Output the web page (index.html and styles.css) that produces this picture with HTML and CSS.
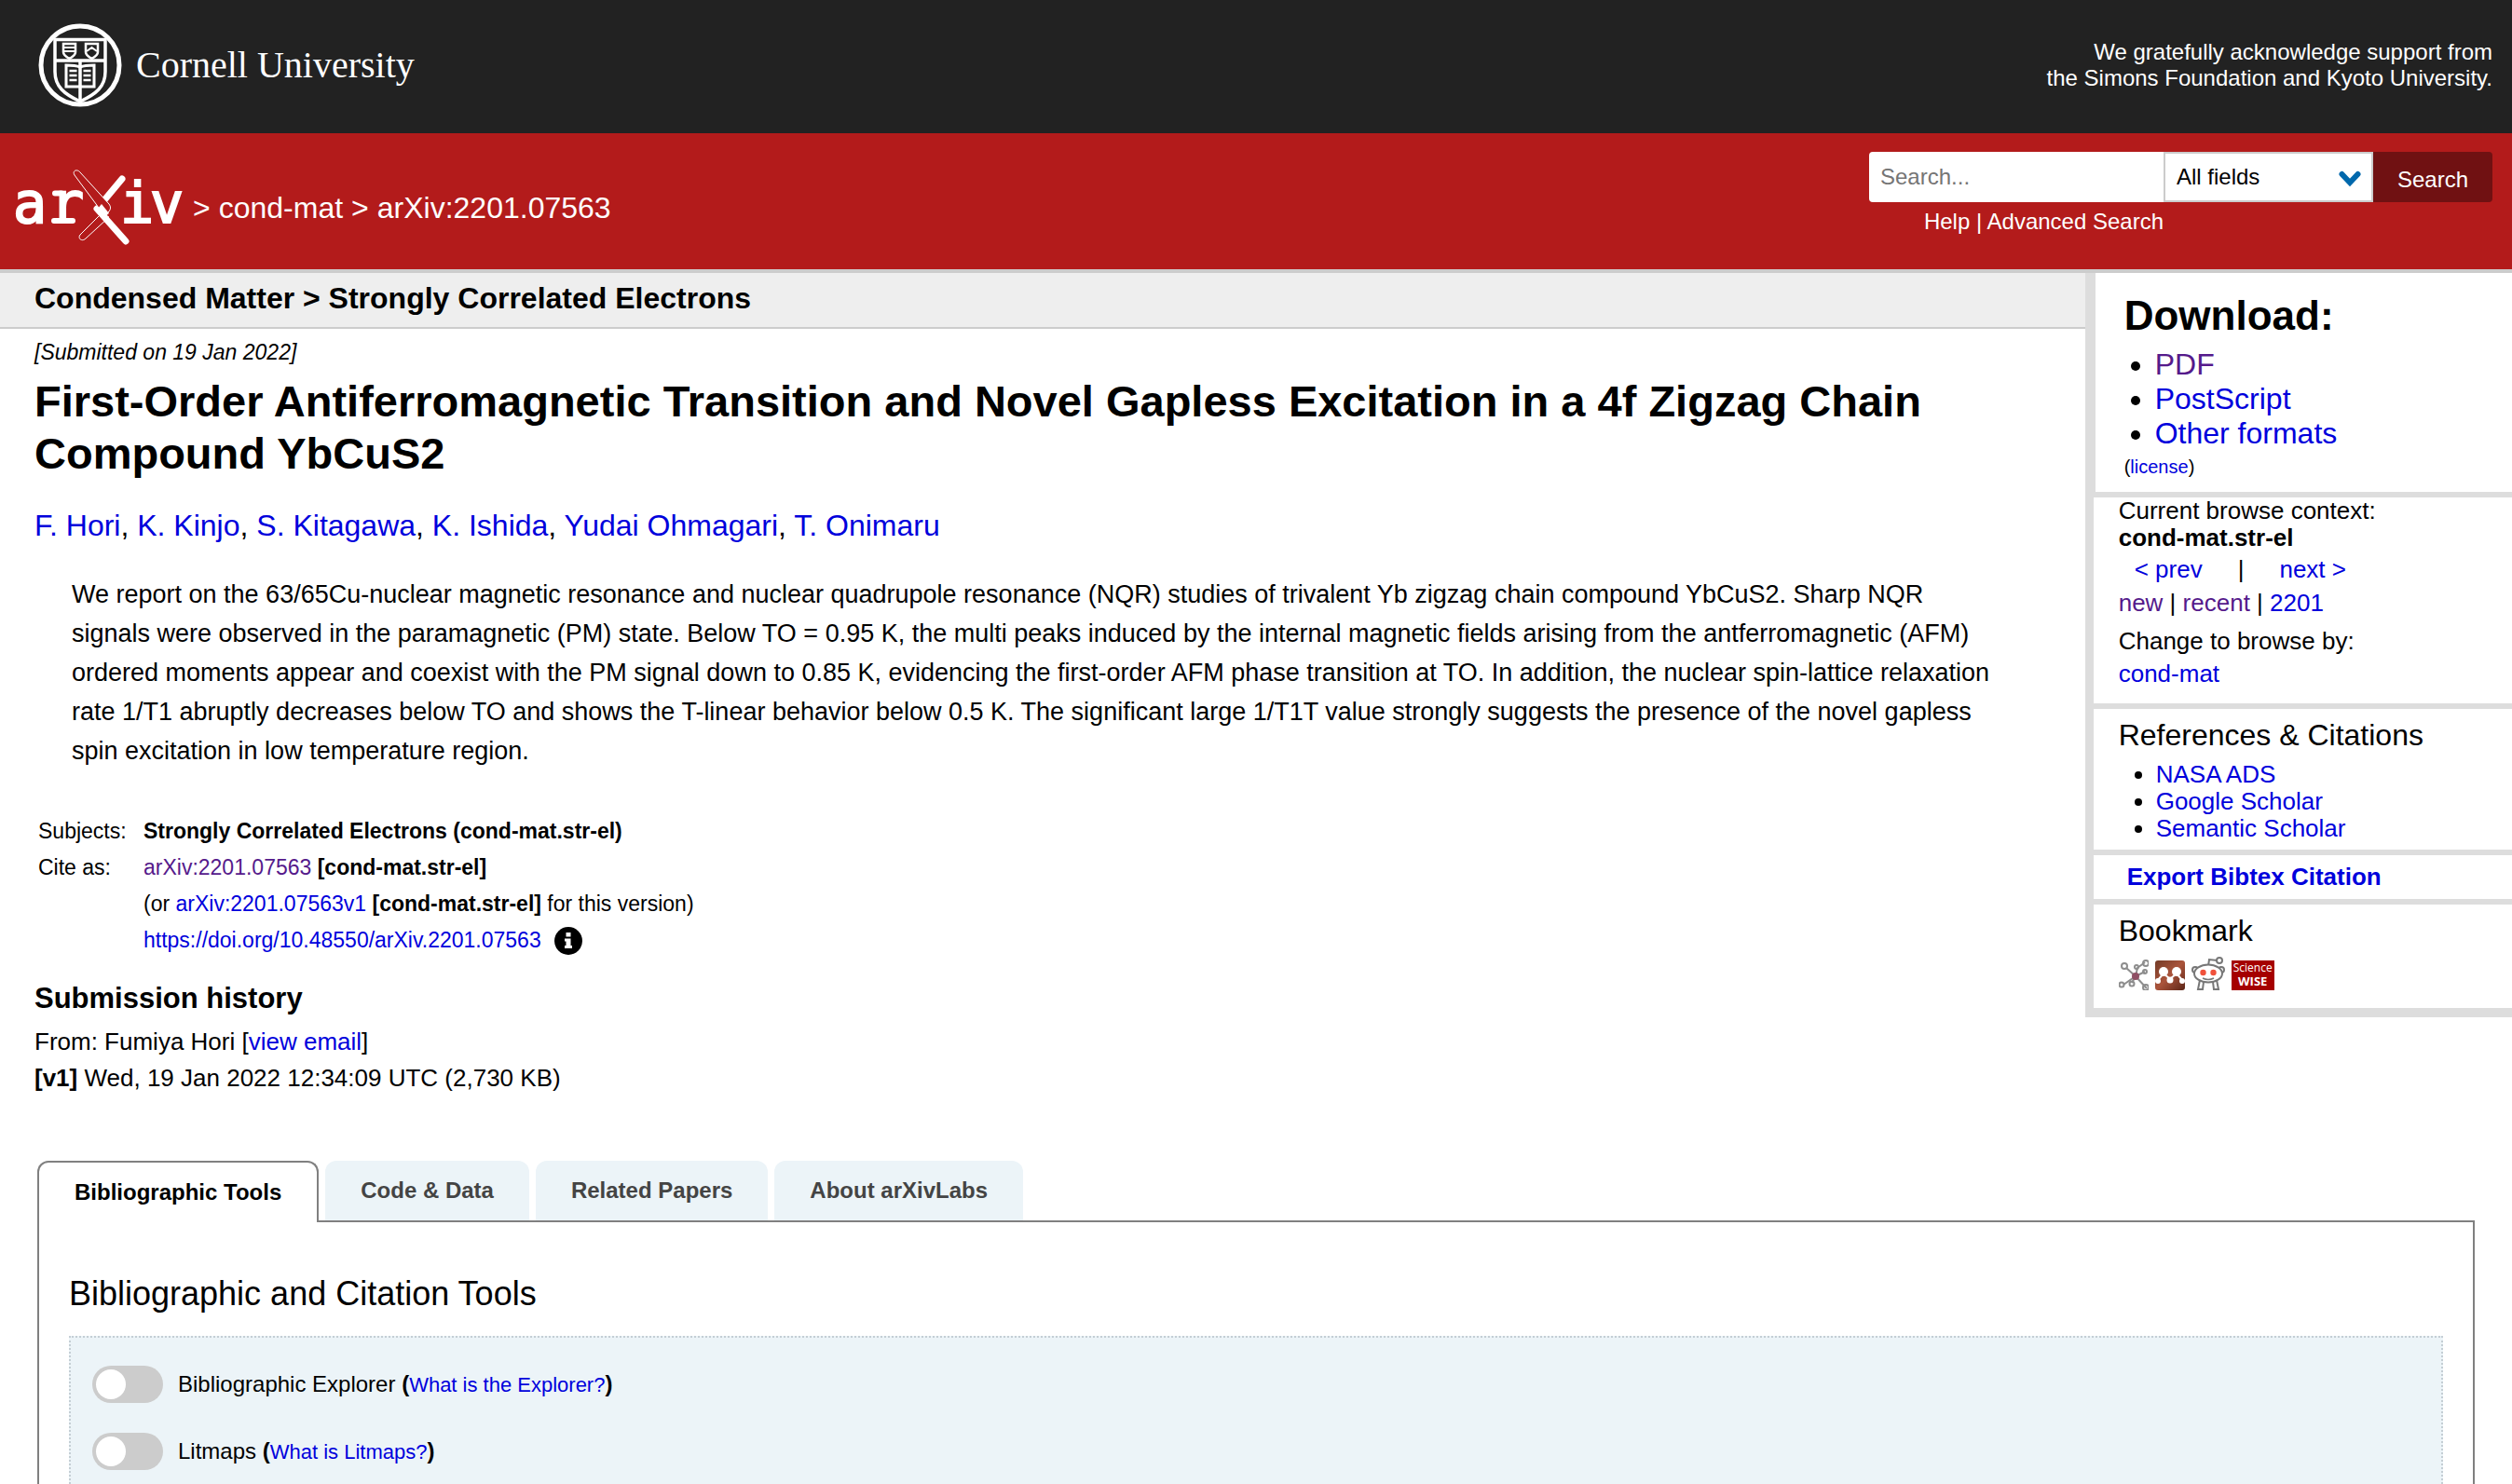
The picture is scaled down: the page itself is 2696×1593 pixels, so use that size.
FILE: index.html
```html
<!DOCTYPE html>
<html lang="en">
<head>
<meta charset="utf-8">
<meta name="viewport" content="width=device-width, initial-scale=1">
<title>[2201.07563] First-Order Antiferromagnetic Transition and Novel Gapless Excitation in a 4f Zigzag Chain Compound YbCuS2</title>
<link rel="stylesheet" href="styles.css">
</head>
<body>
<header>
  <div class="cornell-bar">
    <a class="cornell" href="#">
      <svg class="seal" viewBox="0 0 90 90" aria-hidden="true">
        <g fill="none" stroke="#fff">
          <circle cx="45" cy="45" r="42" stroke-width="5"/>
          <path d="M18 17.500H72V52C72 68 62 76 45 84C28 76 18 68 18 52Z" stroke-width="3.500"/>
          <path d="M18 40H72M45 40V84" stroke-width="3.500"/>
          <path d="M27 22H40V31C40 34 37 36 33.500 38C30 36 27 34 27 31ZM51 22H64V31C64 34 61 36 57.500 38C54 36 51 34 51 31Z" stroke-width="2.500"/>
          <path d="M28 26H39M28 30H39M52 30L57.500 26L63 30" stroke-width="2"/>
          <path d="M45 47C40 45 35 45 30 45V68H45H60V45C55 45 50 45 45 47" stroke-width="3"/>
          <path d="M33.500 51H41.500M33.500 56H41.500M33.500 61H41.500M48.500 51H56.500M48.500 56H56.500M48.500 61H56.500" stroke-width="2.500"/>
        </g>
      </svg>
      <span class="cornell-name">Cornell University</span>
    </a>
    <a class="support" href="#">We gratefully acknowledge support from<br>the Simons Foundation and Kyoto University.</a>
  </div>
  <div class="arxiv-bar">
    <div class="crumbs">
      <a class="arxiv-logo" href="#" aria-label="arXiv">
        <svg viewBox="-8 0 190 84" aria-hidden="true">
          <g class="logo-text"><text x="-2" y="58">a</text><text x="38" y="58">r</text><text x="113" y="58">i</text><text x="145" y="58">v</text></g>
          <path d="M42 56H62M43 26.500H50" stroke="#fff" stroke-width="6" stroke-linecap="round"/>
          <path d="M93 48L70 71C67 75 72 79 76 75L101 52Z" fill="#b31b1b" stroke="#fff" stroke-width="1"/>
          <path d="M115 11L95 35M88 43L119 78" fill="none" stroke="#fff" stroke-width="7" stroke-linecap="round"/>
          <path d="M64 7C61 2 67 0 70 4L101 38C103 41 103 43 101 46L97 50L90 42Z" fill="#b31b1b" stroke="#fff" stroke-width="1"/>
          <path d="M88 44L93 38L101 48L95 53Z" fill="#fff"/>
        </svg>
      </a>
      <span>&gt;</span> <a href="#">cond-mat</a> <span>&gt;</span> <span>arXiv:2201.07563</span>
    </div>
    <form class="search">
      <div class="search-row">
        <input class="search-box" type="text" placeholder="Search..." aria-label="Search term or terms">
        <div class="field-wrap">
          <select class="field" aria-label="Field to search"><option>All fields</option></select>
          <svg class="chevron" viewBox="0 0 24 18" aria-hidden="true"><path d="M3.500 4L12 13L20.500 4" fill="none" stroke="#0068ac" stroke-width="6" stroke-linecap="round"/></svg>
        </div>
        <button class="search-button" type="button">Search</button>
      </div>
      <p class="search-help"><a href="#">Help</a> | <a href="#">Advanced Search</a></p>
    </form>
  </div>
</header>
<main>
  <div class="columns">
    <article>
      <div class="subject">Condensed Matter &gt; Strongly Correlated Electrons</div>
      <div class="record">
        <p class="dateline">[Submitted on 19 Jan 2022]</p>
        <h1>First-Order Antiferromagnetic Transition and Novel Gapless Excitation in a 4f Zigzag Chain Compound YbCuS2</h1>
        <p class="authors"><a href="#">F. Hori</a>, <a href="#">K. Kinjo</a>, <a href="#">S. Kitagawa</a>, <a href="#">K. Ishida</a>, <a href="#">Yudai Ohmagari</a>, <a href="#">T. Onimaru</a></p>
        <blockquote>We report on the 63/65Cu-nuclear magnetic resonance and nuclear quadrupole resonance (NQR) studies of trivalent Yb zigzag chain compound YbCuS2. Sharp NQR signals were observed in the paramagnetic (PM) state. Below TO = 0.95 K, the multi peaks induced by the internal magnetic fields arising from the antferromagnetic (AFM) ordered moments appear and coexist with the PM signal down to 0.85 K, evidencing the first-order AFM phase transition at TO. In addition, the nuclear spin-lattice relaxation rate 1/T1 abruptly decreases below TO and shows the T-linear behavior below 0.5 K. The significant large 1/T1T value strongly suggests the presence of the novel gapless spin excitation in low temperature region.</blockquote>
        <table class="meta">
          <tr><th>Subjects:</th><td><b>Strongly Correlated Electrons (cond-mat.str-el)</b></td></tr>
          <tr><th>Cite as:</th><td><a class="visited" href="#">arXiv:2201.07563</a> <b>[cond-mat.str-el]</b></td></tr>
          <tr><th></th><td>(or <a href="#">arXiv:2201.07563v1</a> <b>[cond-mat.str-el]</b> for this version)</td></tr>
          <tr><th></th><td><span class="doi"><a href="#">https://doi.org/10.48550/arXiv.2201.07563</a>
            <svg class="info" viewBox="0 0 30 30" aria-hidden="true"><circle cx="15" cy="15" r="15"/><path d="M12.500 6H17.500V10.500H12.500ZM11 12.500H17.500V20H19V23H11V20H12.500V15.500H11Z" fill="#fff"/></svg></span></td></tr>
        </table>
        <h2>Submission history</h2>
        <p class="history">From: Fumiya Hori [<a href="#">view email</a>]<br><b>[v1]</b> Wed, 19 Jan 2022 12:34:09 UTC (2,730 KB)</p>
      </div>
    </article>
    <aside>
      <section class="download">
        <h2>Download:</h2>
        <ul><li><a class="visited" href="#">PDF</a></li><li><a href="#">PostScript</a></li><li><a href="#">Other formats</a></li></ul>
        <p class="license">(<a href="#">license</a>)</p>
      </section>
      <section class="context">
        <p>Current browse context:<br><b>cond-mat.str-el</b></p>
        <p class="prevnext"><a href="#">&lt;&nbsp;prev</a><span>|</span><a href="#">next&nbsp;&gt;</a></p>
        <p class="links"><a class="visited" href="#">new</a> | <a class="visited" href="#">recent</a> | <a href="#">2201</a></p>
        <p class="links change">Change to browse by:<br><a href="#">cond-mat</a></p>
      </section>
      <section class="references">
        <h3>References &amp; Citations</h3>
        <ul><li><a href="#">NASA ADS</a></li><li><a href="#">Google Scholar</a></li><li><a href="#">Semantic Scholar</a></li></ul>
      </section>
      <section class="export"><a href="#">Export Bibtex Citation</a></section>
      <section class="bookmark">
        <h3>Bookmark</h3>
        <div class="bookmark-icons">
          <a href="#" aria-label="CiteULike"><svg viewBox="0 0 32 36" width="32" height="36"><g fill="none" stroke="#8d8d8d" stroke-width="2"><path d="M8 12L18 21L30 34M18 21L5 30M18 21L14 28M18 21L20 12L28 6M18 21L28 16" /><circle cx="6" cy="10" r="3"/><circle cx="29" cy="7" r="3"/><circle cx="19" cy="11" r="2"/><circle cx="28" cy="16" r="2"/><circle cx="3" cy="30" r="2.500"/><circle cx="14" cy="29" r="2.500"/><circle cx="29" cy="33" r="3"/></g><circle cx="18" cy="21" r="4" fill="#8f5065"/></svg></a>
          <a href="#" aria-label="Mendeley"><svg viewBox="0 0 32 36" width="32" height="36"><defs><linearGradient id="rust" x2="1" y2="1"><stop stop-color="#733b27"/><stop offset=".5" stop-color="#aa543b"/><stop offset="1" stop-color="#5b2517"/></linearGradient></defs><rect y="4" width="32" height="32" rx="3" fill="url(#rust)"/><g fill="#fff"><circle cx="9" cy="16" r="5"/><circle cx="23" cy="16" r="5"/><circle cx="16" cy="25" r="3.500"/><circle cx="3" cy="26" r="3"/><circle cx="29" cy="26" r="3"/></g><path d="M3 25L9 18L16 24L23 18L29 25" fill="none" stroke="#fff" stroke-width="2"/></svg></a>
          <a href="#" aria-label="Reddit"><svg viewBox="0 0 36 36" width="36" height="36"><g fill="#fff" stroke="#777" stroke-width="2"><path d="M18 10L19 3L28 4" fill="none"/><circle cx="30" cy="4" r="3"/><circle cx="4" cy="14" r="3"/><circle cx="32" cy="14" r="3"/><path d="M9 25L7 35H12L13 27M23 27L24 35H29L27 25"/><ellipse cx="18" cy="18" rx="15" ry="9.500"/></g><circle cx="12.500" cy="17" r="3.200" fill="#f0523c"/><circle cx="23.500" cy="17" r="3.200" fill="#f0523c"/><path d="M12 23Q18 26 24 23" fill="none" stroke="#777" stroke-width="1.500"/></svg></a>
          <a class="sciencewise" href="#"><span>Science</span><b>WISE</b></a>
        </div>
      </section>
    </aside>
  </div>
  <div class="labs">
    <div class="tabs" role="tablist">
      <button class="tab active" role="tab" aria-selected="true">Bibliographic Tools</button>
      <button class="tab" role="tab">Code &amp; Data</button>
      <button class="tab" role="tab">Related Papers</button>
      <button class="tab" role="tab">About arXivLabs</button>
    </div>
    <div class="panel" role="tabpanel">
      <h2>Bibliographic and Citation Tools</h2>
      <div class="toggles">
        <div class="toggle-row"><input class="switch" type="checkbox" id="explorer"><div><label for="explorer">Bibliographic Explorer</label> <b>(</b><a href="#">What is the Explorer?</a><b>)</b></div></div>
        <div class="toggle-row"><input class="switch" type="checkbox" id="litmaps"><div><label for="litmaps">Litmaps</label> <b>(</b><a href="#">What is Litmaps?</a><b>)</b></div></div>
      </div>
    </div>
  </div>
</main>
</body>
</html>
```
FILE: styles.css
```css
* { box-sizing: border-box; }
body {
  margin: 0;
  min-height: 100vh;
  display: flex;
  flex-direction: column;
  background: #fff;
  color: #000;
  font-family: "Liberation Sans", Arial, sans-serif;
  font-size: 26px;
}
h1, h2, h3, p, ul, blockquote { margin: 0; }
a { color: #0000dc; text-decoration: none; }
a.visited { color: #551a8b; }

/* Page header */
.cornell-bar {
  display: flex;
  justify-content: space-between;
  align-items: center;
  height: 143px;
  padding: 0 21px 4px 41px;
  background: #222;
}
.cornell { display: flex; align-items: center; gap: 15px; color: #fff; }
.seal { width: 90px; height: 90px; }
.cornell-name { font: 40px/48px "Liberation Serif", "Times New Roman", serif; }
.support { color: #fff; font-size: 24px; line-height: 28px; text-align: right; }
.arxiv-bar {
  display: flex;
  justify-content: space-between;
  height: 150px;
  padding: 20px 21px 0 8px;
  background: #b31b1b;
  border-bottom: 4px solid #ccc;
  color: #fff;
}
.arxiv-bar a { color: #fff; }
.crumbs { display: flex; align-items: center; align-self: flex-start; gap: 9px; height: 120px; font-size: 32px; }
.arxiv-logo svg { display: block; width: 190px; height: 84px; }
.logo-text { font-family: "DejaVu Sans Mono", monospace; font-size: 60px; fill: #fff; stroke: #fff; stroke-width: 2; }
.search { width: 669px; }
.search-row { display: flex; height: 54px; }
.search-box, .field, .search-button { font: 24px/28px "Liberation Sans", Arial, sans-serif; }
.search-box { flex: 1; min-width: 0; padding: 0 12px; border: 0; border-radius: 4px 0 0 4px; background: #fff; }
.search-box::placeholder { color: #757575; }
.field-wrap { position: relative; width: 225px; }
.field { width: 100%; height: 100%; padding: 0 12px; border: 2px solid #ccc; border-radius: 0; background: #fff; color: #000; appearance: none; }
.chevron { position: absolute; top: 20px; right: 13px; width: 24px; height: 18px; pointer-events: none; }
.search-button { width: 128px; padding: 6px 0 0; border: 0; border-radius: 0 4px 4px 0; background: #701112; color: #fff; }
.search-help { width: 316px; line-height: 42px; font-size: 24px; text-align: right; }

/* Abstract */
.columns { display: flex; align-items: flex-start; }
article { flex: 1; min-width: 0; }
.subject { height: 60px; padding-left: 37px; border-bottom: 2px solid #ccc; background: #eee; font-size: 32px; font-weight: bold; line-height: 54px; }
.record { padding: 10px 86px 0 37px; }
.dateline { font-size: 23px; font-style: italic; line-height: 30px; }
h1 { margin-top: 10px; font-size: 47px; line-height: 56px; }
.authors { margin-top: 30px; font-size: 32px; line-height: 38px; }
blockquote { margin-top: 34px; padding-left: 40px; font-size: 27px; line-height: 42px; }
.meta { margin-top: 46px; border-collapse: collapse; font-size: 23px; line-height: 39px; }
.meta th { width: 117px; padding: 0 0 0 4px; font-weight: normal; text-align: left; }
.meta td { padding: 0; }
.doi { display: flex; align-items: center; gap: 14px; }
.info { width: 30px; height: 30px; }
.record h2 { margin-top: 24px; font-size: 31px; line-height: 38px; }
.history { margin-top: 8px; line-height: 39px; }

/* Sidebar */
aside {
  flex: 0 0 17%;
  display: flex;
  flex-direction: column;
  gap: 6px;
  border: solid #ddd;
  border-width: 0 0 10px 9px;
  background: #ddd;
  line-height: 29px;
}
aside section { padding-left: 27px; background: #fff; }
aside ul { padding-left: 40px; }
aside h3 { font-size: 32px; font-weight: normal; line-height: 38px; }
aside .download { height: 235px; padding-top: 20px; padding-left: 26px; border-left: 2px solid #ddd; }
.download h2 { padding-left: 5px; font-size: 44px; line-height: 52px; }
.download ul { padding-left: 38px; font-size: 32px; line-height: 37px; margin-top: 8px; }
.download .license { padding-left: 5px; margin-top: 2px; font-size: 20px; line-height: 30px; }
.context { padding-bottom: 14px; }
.prevnext { display: flex; gap: 38px; padding-left: 17px; line-height: 38px; }
.links { line-height: 35px; }
.change { margin-top: 6px; }
.references { padding-top: 9px; padding-bottom: 8px; }
.references ul { margin-top: 9px; }
.export { padding-top: 9px; padding-bottom: 9px; }
.export a { padding-left: 9px; font-weight: bold; }
.bookmark { padding-top: 9px; padding-bottom: 19px; }
.bookmark-icons { display: flex; align-items: flex-end; gap: 7px; margin-top: 9px; }
.bookmark-icons svg { display: block; }
.sciencewise { display: flex; flex-direction: column; width: 46px; height: 32px; background: #a50000; color: #fff; font: 13px/15px "Open Sans", sans-serif; text-align: center; }
.sciencewise span { font-size: 12px; }

/* Labs tabs */
main { flex: 1; display: flex; flex-direction: column; }
.labs { flex: 1; display: flex; flex-direction: column; margin-top: 69px; padding: 0 40px; }
.tabs { display: flex; gap: 7px; }
.tab { height: 64px; padding: 0 38px; border: 0; border-radius: 12px 12px 0 0; background: #ecf4f8; color: #444; font: bold 24px/28px "Liberation Sans", Arial, sans-serif; }
.tab.active { z-index: 1; height: 66px; margin-bottom: -2px; border: 2px solid #808080; border-bottom: 0; background: #fff; color: #000; }
.panel { flex: 1; display: flex; flex-direction: column; padding: 54px 32px 0; border: 2px solid #808080; border-bottom: 0; }
.panel h2 { font-size: 36px; font-weight: normal; line-height: 46px; }
.toggles { flex: 1; margin-top: 22px; padding: 30px 23px 0; border: 2px dotted #c4ced4; border-bottom: 0; background: #ecf4f8; }
.toggle-row { display: flex; align-items: center; gap: 16px; height: 40px; margin-bottom: 32px; font-size: 24px; }
.toggle-row:last-child { margin-bottom: 0; }
.toggle-row a { font-size: 22px; }
.switch { display: flex; align-items: center; width: 76px; height: 40px; margin: 0; padding: 0 4px; border-radius: 20px; background: #ccc; appearance: none; }
.switch::before { content: ""; width: 32px; height: 32px; border-radius: 50%; background: #fff; }
```
